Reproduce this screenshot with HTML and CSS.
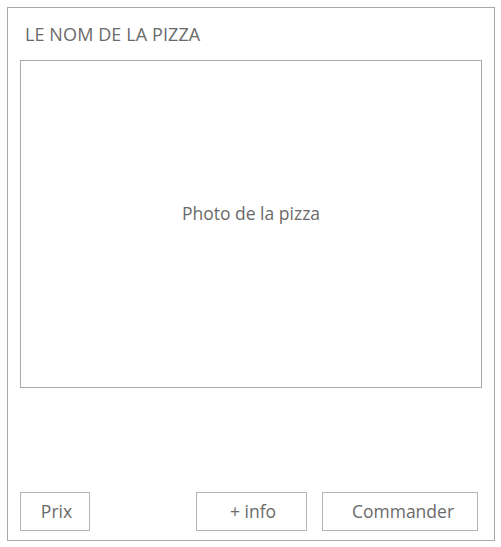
FILE: index.html
```html
<!DOCTYPE html>
<html lang="fr">
<head>
  <meta charset="UTF-8" />
  <meta name="viewport" content="width=device-width, initial-scale=1.0" />
  <title>Pizza</title>
  <link rel="stylesheet" href="styles.css">
</head>
<body>
  <div class="card">
    <h2 class="pizza-name">LE NOM DE LA PIZZA</h2>
    <div class="photo">Photo de la pizza</div>
    <div class="actions">
      <button class="btn btn-prix">Prix</button>
      <div class="actions-right">
        <button class="btn btn-info">+ info</button>
        <button class="btn btn-order">Commander</button>
      </div>
    </div>
  </div>
</body>
</html>
```

FILE: styles.css
```css
body {
  margin: 0;
  padding: 7px;
  background: #fff;
  font-family: "Open Sans", "Noto Sans", sans-serif;
  color: #666;
}
.card {
  box-sizing: border-box;
  width: 488px;
  height: 534px;
  border: 1px solid #a8a8a8;
  padding: 0 12px 9px 12px;
  display: flex;
  flex-direction: column;
}
.pizza-name {
  margin: 0;
  height: 52px;
  line-height: 52px;
  padding-left: 5px;
  font-size: 18px;
  font-weight: normal;
  letter-spacing: 0.1px;
  color: #6a6a6a;
}
.photo {
  box-sizing: border-box;
  height: 328px;
  border: 1px solid #a8a8a8;
  display: flex;
  align-items: center;
  justify-content: center;
  font-size: 17.5px;
  color: #6a6a6a;
  padding-bottom: 22px;
}
.actions {
  margin-top: auto;
  display: flex;
  justify-content: space-between;
  align-items: flex-end;
}
.actions-right {
  display: flex;
  gap: 15px;
  margin-right: 4px;
}
.btn {
  box-sizing: border-box;
  height: 39px;
  border: 1px solid #b4b4b4;
  background: #fff;
  font-family: inherit;
  font-size: 17.5px;
  color: #6a6a6a;
  padding: 0 0 2px 3px;
}
.btn-prix {
  width: 70px;
}
.btn-info {
  width: 111px;
}
.btn-order {
  width: 156px;
  padding-left: 6px;
}
```
